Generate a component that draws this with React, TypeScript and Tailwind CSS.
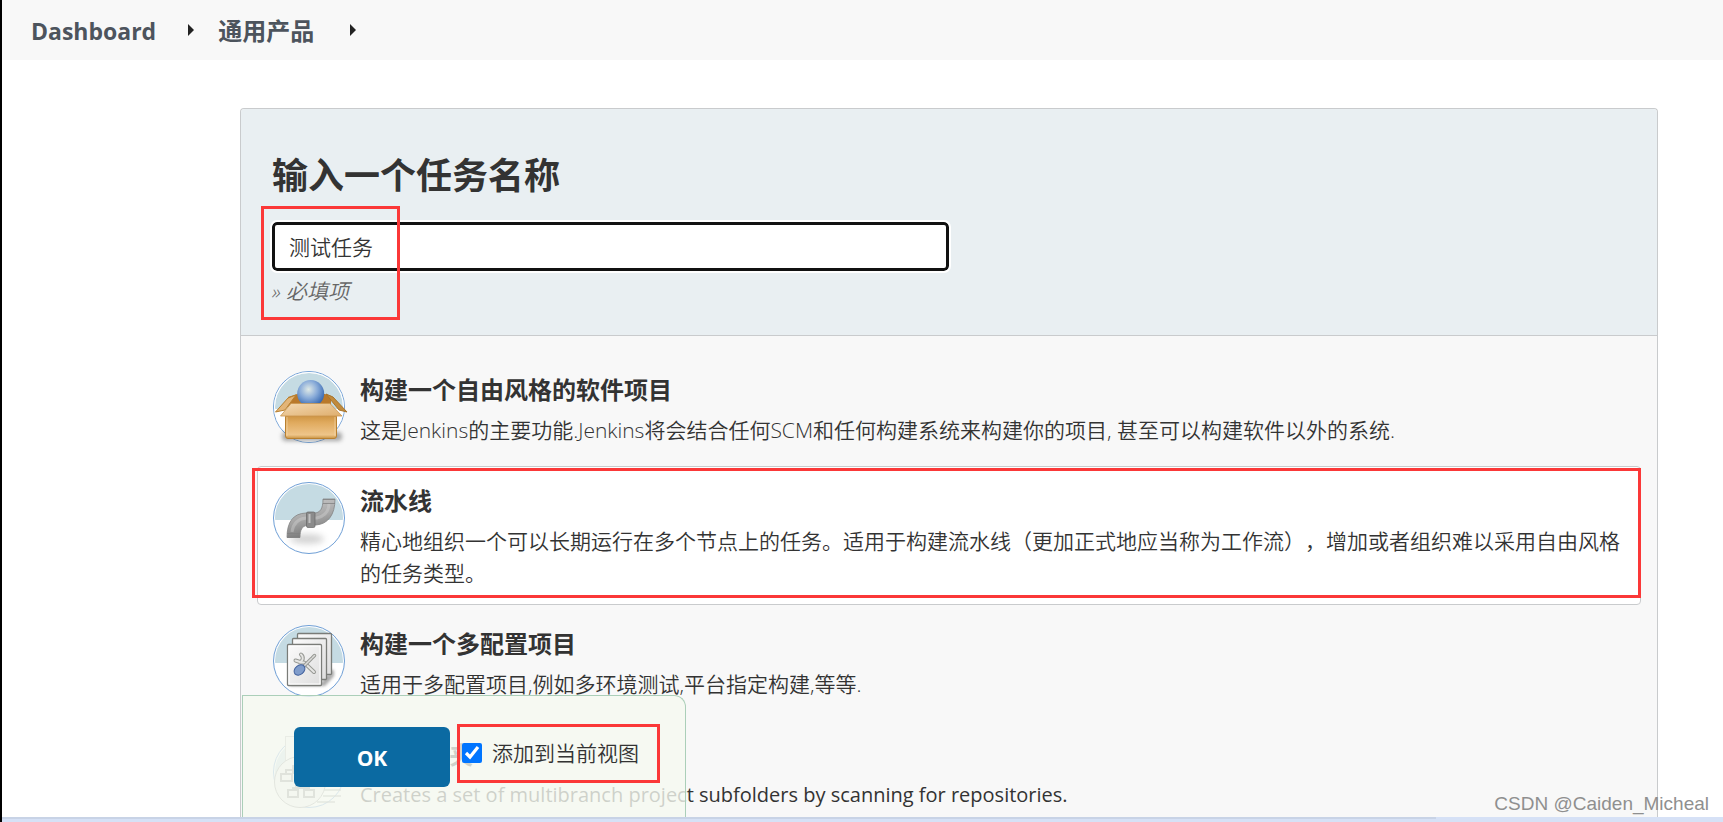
import { ReactNode, useState } from "react";

function Disc({ id, shadow }: { id: string; shadow?: boolean }) {
  return (
    <>
      <defs>
        <clipPath id={id}>
          <circle cx="36" cy="36" r="34" />
        </clipPath>
      </defs>
      <circle cx="36" cy="36" r="35.5" fill="#fff" stroke="#6f9fd6" strokeWidth="1" />
      <rect x="0" y="0" width="72" height="38" fill="#c5dbe3" clipPath={`url(#${id})`} />
      {shadow && <circle cx="36" cy="36" r="34.6" fill="none" stroke="#fff" strokeWidth="0.8" />}
    </>
  );
}

const iconClass = "size-18 shrink-0 overflow-visible";

function BoxIcon() {
  return (
    <svg viewBox="0 0 72 72" className={iconClass} aria-hidden="true">
      <defs>
        <radialGradient id="ball" cx="0.42" cy="0.35" r="0.65">
          <stop offset="0" stopColor="#dfe9e6" />
          <stop offset="0.5" stopColor="#8aacd9" />
          <stop offset="1" stopColor="#3567b0" />
        </radialGradient>
        <linearGradient id="crate" x1="0" y1="0" x2="0" y2="1">
          <stop offset="0" stopColor="#c98f3c" />
          <stop offset="0.35" stopColor="#e0aa5e" />
          <stop offset="0.85" stopColor="#eec58a" />
          <stop offset="1" stopColor="#c99343" />
        </linearGradient>
        <linearGradient id="flap" x1="0" y1="0" x2="1" y2="1">
          <stop offset="0" stopColor="#f3d9b3" />
          <stop offset="1" stopColor="#dfae6c" />
        </linearGradient>
        <filter id="soft1" x="-30%" y="-80%" width="160%" height="260%">
          <feGaussianBlur stdDeviation="2" />
        </filter>
      </defs>
      <Disc id="disc1" shadow />
      <rect x="9" y="61" width="60" height="9" rx="4" fill="#555" opacity="0.5" filter="url(#soft1)" />
      <path d="M15 26 24 23h28l6 2v18H15Z" fill="#b9792b" />
      <path d="M15 27 23 24 12 39 2.5 41Z" fill="#e3b577" stroke="#b8802f" strokeWidth="1" />
      <path d="M53 23 60 26 74 41 66 39Z" fill="#c18a3c" stroke="#a8742b" strokeWidth="1" />
      <circle cx="37.7" cy="22.5" r="13.5" fill="url(#ball)" />
      <rect x="12.5" y="43" width="51" height="24.5" rx="2.5" fill="url(#crate)" stroke="#b9802f" />
      <path d="M18 32.5H57L69 45H7.5Z" fill="url(#flap)" stroke="#c9964e" strokeWidth="0.8" />
      <path d="M14 46v19M62 46v19" stroke="#f5dcb4" opacity="0.6" />
    </svg>
  );
}

function PipeIcon() {
  return (
    <svg viewBox="0 0 72 72" className={iconClass} aria-hidden="true">
      <defs>
        <linearGradient id="pipe" x1="0.3" y1="0" x2="0.6" y2="1">
          <stop offset="0" stopColor="#c8c8c8" />
          <stop offset="0.5" stopColor="#a6a6a6" />
          <stop offset="1" stopColor="#727272" />
        </linearGradient>
        <filter id="soft2" x="-30%" y="-80%" width="160%" height="260%">
          <feGaussianBlur stdDeviation="3" />
        </filter>
      </defs>
      <Disc id="disc2" />
      <ellipse cx="34" cy="57" rx="17" ry="5" fill="#555" opacity="0.25" filter="url(#soft2)" />
      <path
        d="M14 55.5C14 40 20 31.5 33 31L41 31C47 31 50 27 50 17H62C62 33 55 42 43 43L34 43.5C29 44 27 48 27 55.5Z"
        fill="url(#pipe)"
        stroke="#848484"
        strokeWidth="0.8"
      />
      <path d="M19 50C20 41 25 37 33 36L44 36C53 34 56 28 56 21" fill="none" stroke="#d4d4d4" strokeWidth="3" opacity="0.4" />
      <path d="M50 17.5h12M50 21.5h12M14 51.5h13M14 55.5h13" stroke="#828282" strokeWidth="0.8" />
      <rect x="33.5" y="30" width="8.5" height="15.5" rx="1.5" fill="#8b8b8b" stroke="#666" strokeWidth="0.7" />
      <path d="M36.5 32v9" stroke="#c2c2c2" strokeWidth="2" />
    </svg>
  );
}

function ConfigIcon() {
  return (
    <svg viewBox="0 0 72 72" className={iconClass} aria-hidden="true">
      <defs>
        <linearGradient id="sheet" x1="0" y1="0" x2="1" y2="1">
          <stop offset="0" stopColor="#fbfbfb" />
          <stop offset="1" stopColor="#dedede" />
        </linearGradient>
        <filter id="soft3" x="-30%" y="-30%" width="160%" height="160%">
          <feGaussianBlur stdDeviation="1.5" />
        </filter>
      </defs>
      <Disc id="disc3" />
      <path d="M17 57H50V50H57V45H61V51L52 61H17Z" fill="#555" opacity="0.5" filter="url(#soft3)" />
      <g fill="url(#sheet)" stroke="#7a7c78" strokeWidth="1.3">
        <rect x="24.5" y="8.5" width="34" height="41" rx="1" />
        <rect x="19.5" y="13.5" width="34" height="41" rx="1" />
        <rect x="14.5" y="19.5" width="34" height="41" rx="1" />
      </g>
      <rect x="16" y="21" width="31" height="38" fill="none" stroke="#fff" />
      <g fill="none" strokeLinecap="round" strokeLinejoin="round">
        <path d="M28 29.5C31 32 30 36 27 37L22.5 35.5M27 37.5 31 37.5 41 47" stroke="#979994" strokeWidth="4" />
        <path d="M28 29.5C31 32 30 36 27 37L22.5 35.5M27 37.5 31 37.5 41 47" stroke="#e6e6e4" strokeWidth="2" />
        <path d="M39.5 32.5 41.5 30.5M38.5 33.5 31 41" stroke="#979994" strokeWidth="3.5" />
        <path d="M39.5 32.5 41.5 30.5M38.5 33.5 31 41" stroke="#dcdcda" strokeWidth="1.5" />
      </g>
      <ellipse cx="26.5" cy="45" rx="6" ry="4.5" transform="rotate(-40 26.5 45)" fill="#7f9ccb" stroke="#41609c" />
    </svg>
  );
}

function FolderIcon() {
  return (
    <svg viewBox="0 0 72 72" className={iconClass} aria-hidden="true">
      <Disc id="disc4" />
      <rect x="12.5" y="0.5" width="34" height="44" fill="#f4f4f4" stroke="#bbb" />
      <path d="M46 54h22M50 60h18M44 66h18" stroke="#8e908c" strokeWidth="2" opacity="0.6" />
      <circle cx="27" cy="46" r="25.5" fill="#f1f1f1" stroke="#999" />
      <g fill="none" stroke="#8c8e8a" strokeWidth="2">
        <rect x="20" y="30" width="10" height="7" />
        <rect x="8" y="38" width="11" height="7" />
        <rect x="23" y="44" width="11" height="6" />
        <rect x="15" y="54" width="10" height="7" />
        <rect x="31" y="54" width="10" height="7" />
        <path d="M13 38v-4h7M28 50v2M20 54v-2h16v2" />
      </g>
    </svg>
  );
}

type Kind = { id: string; title: string; text: string; latin?: boolean; icon: ReactNode };

const kinds: Kind[] = [
  {
    id: "freestyle",
    title: "构建一个自由风格的软件项目",
    text: "这是Jenkins的主要功能.Jenkins将会结合任何SCM和任何构建系统来构建你的项目, 甚至可以构建软件以外的系统.",
    icon: <BoxIcon />,
  },
  {
    id: "pipeline",
    title: "流水线",
    text: "精心地组织一个可以长期运行在多个节点上的任务。适用于构建流水线（更加正式地应当称为工作流），增加或者组织难以采用自由风格的任务类型。",
    icon: <PipeIcon />,
  },
  {
    id: "matrix",
    title: "构建一个多配置项目",
    text: "适用于多配置项目,例如多环境测试,平台指定构建,等等.",
    icon: <ConfigIcon />,
  },
  {
    id: "organization",
    title: "Git 文件夹",
    text: "Creates a set of multibranch project subfolders by scanning for repositories.",
    latin: true,
    icon: <FolderIcon />,
  },
];

function Caret() {
  return (
    <svg viewBox="0 0 6 12" className="h-3 w-[6px]" aria-hidden="true">
      <path d="M0 0 6 6 0 12Z" fill="#222" />
    </svg>
  );
}

function Highlight({ className }: { className: string }) {
  return <span aria-hidden="true" className={`pointer-events-none absolute z-20 border-3 border-[#fb3838] ${className}`} />;
}

export default function App() {
  const [name, setName] = useState("测试任务");
  const [selected, setSelected] = useState("pipeline");
  const [addToView, setAddToView] = useState(true);

  return (
    <div className="relative flex h-screen flex-col overflow-hidden border-l-2 border-black bg-white font-['Open_Sans','Noto_Sans_CJK_SC',sans-serif] text-[21px] leading-8 text-[#333] [text-spacing-trim:space-all]">
      <nav className="flex h-15 shrink-0 items-center bg-[#f8f8f8] pl-[29px] font-bold text-[#4d545d]">
        <a href="#dashboard" className="pt-[2px] text-[23px]">Dashboard</a>
        <span className="mr-6 ml-8"><Caret /></span>
        <a href="#product" className="pt-[2px] text-[24px]">通用产品</a>
        <span className="ml-9"><Caret /></span>
      </nav>

      <form className="mt-12 mr-[65px] ml-[238px] min-h-0 flex-1 rounded-t border border-b-0 border-[#c9cbcd] bg-[#f8f8f8]" onSubmit={(e) => e.preventDefault()}>
        <div className="h-[227px] rounded-t border-b border-[#c9cbcd] bg-[#e9eff2] px-[31px] pt-[43px]">
          <h1 className="text-[36px] leading-[48px] font-bold">
            <label htmlFor="name">输入一个任务名称</label>
          </h1>
          <div className="relative mt-[22px] w-[677px] max-w-full">
            <input
              id="name"
              value={name}
              onChange={(e) => setName(e.target.value)}
              className="block h-[49px] w-full rounded-[5px] border-3 border-[#111] bg-white px-[14px] pb-[2px] font-[350] outline-2 outline-white"
            />
            <p className="mt-1 font-[350] text-[#666] italic">» 必填项</p>
            <Highlight className="-top-4 -left-[11px] h-[114px] w-[139px]" />
          </div>
        </div>

        <ul className="flex flex-col gap-1 px-4 pt-[19px]">
          {kinds.map((kind) => (
            <li key={kind.id} className="relative">
              <button
                type="button"
                onClick={() => setSelected(kind.id)}
                className={`flex w-full items-start gap-[15px] rounded border pt-[15px] pr-[14px] pb-[15px] pl-[15px] text-left ${
                  selected === kind.id ? "border-[#c9cbcd] bg-white" : "border-transparent"
                }`}
              >
                {kind.icon}
                <span className="flex min-w-0 flex-col gap-2 pt-[3px]">
                  <span className="text-[24px] font-bold">{kind.title}</span>
                  <span className={kind.latin ? "text-[20px]" : "font-[350]"}>{kind.text}</span>
                </span>
              </button>
              {kind.id === "pipeline" && <Highlight className="top-[2px] right-0 -left-[5px] h-[130px]" />}
            </li>
          ))}
        </ul>
      </form>

      <div className="absolute bottom-[5px] left-[240px] z-10 flex h-[122px] w-[444px] items-start rounded-tr-xl border border-b-0 border-[#abcfb9] bg-[#f5f9f0]/80 pt-[31px] pl-[51px]">
        <button type="submit" className="h-15 w-39 rounded-md bg-[#0b6aa2] pt-[2px] font-bold text-white">
          OK
        </button>
        <div className="relative ml-[7px] flex h-15 w-[203px] items-center pl-[5px]">
          <label className="flex items-center gap-[10px] pb-2 font-[350]">
            <input type="checkbox" checked={addToView} onChange={(e) => setAddToView(e.target.checked)} className="size-5 accent-[#0075ff]" />
            添加到当前视图
          </label>
          <Highlight className="-top-[3px] right-0 left-0 h-[59px]" />
        </div>
      </div>

      <div className="h-[5px] shrink-0 bg-[#d6e1f6]">
        <div className="h-[2px] w-5/6 bg-[#c8d3e6]" />
      </div>

      <p className="absolute right-[14px] bottom-0 z-20 font-['Liberation_Sans',sans-serif] text-[19px] leading-9 text-[#8f8f8f]">CSDN @Caiden_Micheal</p>
    </div>
  );
}
